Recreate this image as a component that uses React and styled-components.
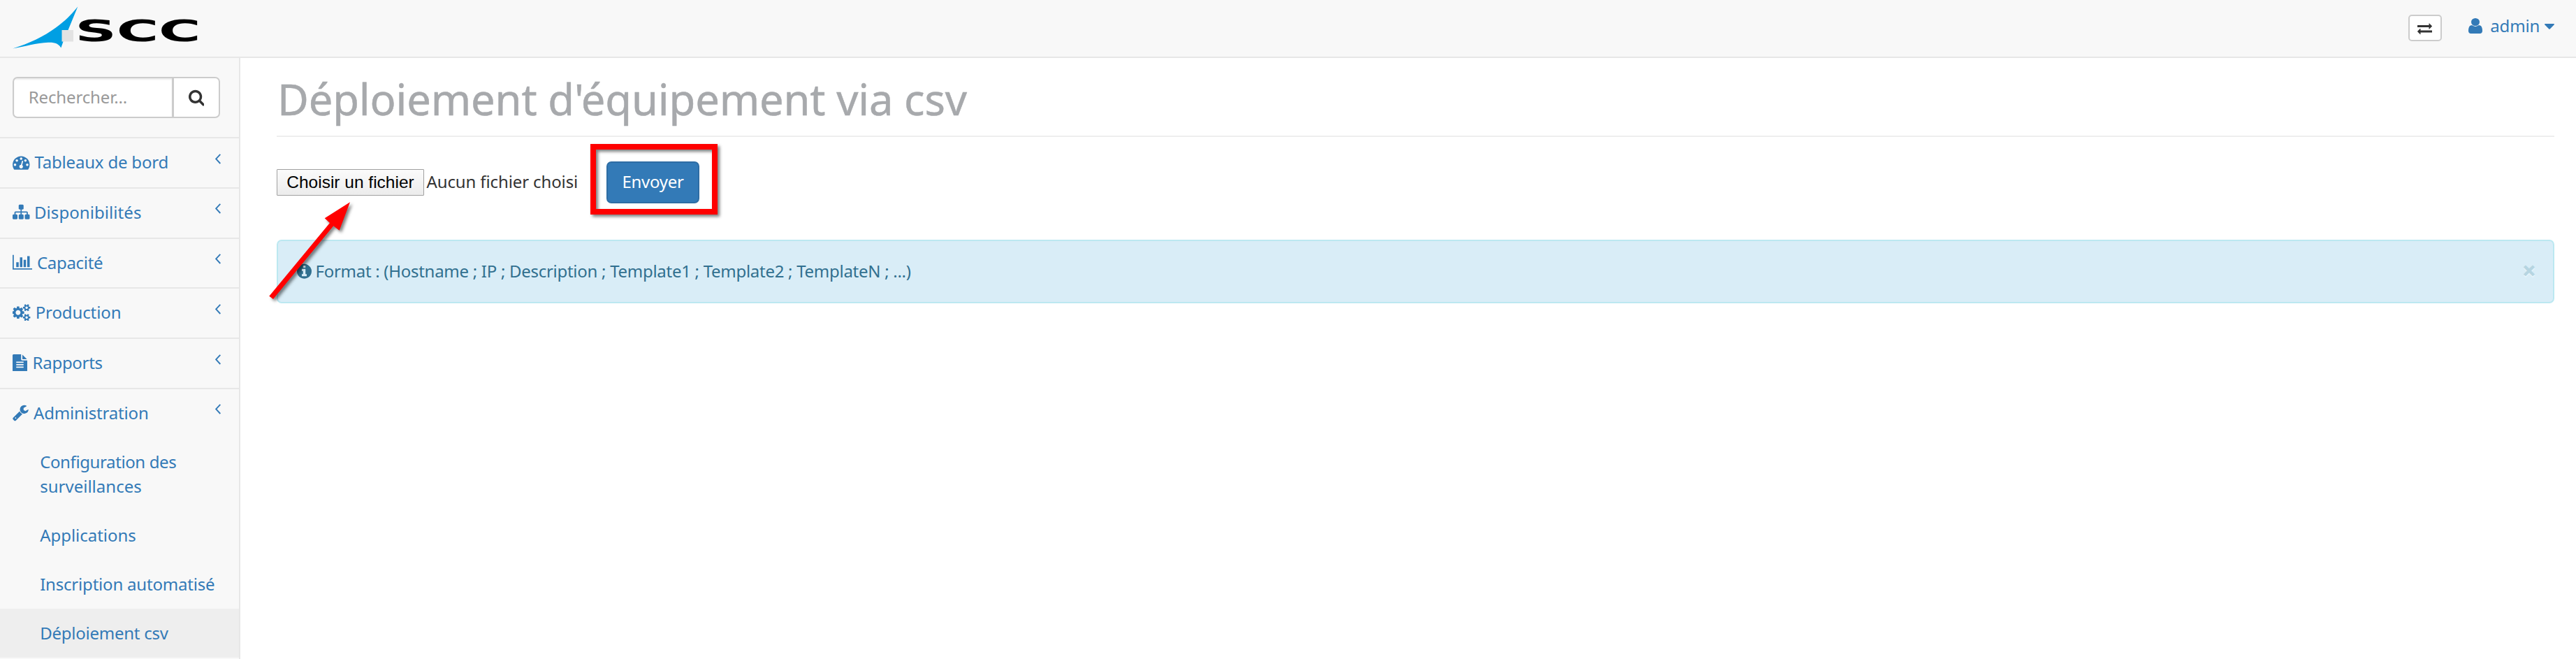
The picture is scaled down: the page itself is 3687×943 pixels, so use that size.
import React from "react";
import styled, { createGlobalStyle } from "styled-components";

const GlobalStyle = createGlobalStyle`
  *, *::before, *::after { box-sizing: border-box; }
  html, body, #root { height: 100%; }
  body {
    margin: 0;
    background: #fff;
    color: #333;
    font-family: "Noto Sans", "Open Sans", sans-serif;
    font-size: 24px;
    line-height: 35px;
    overflow: hidden;
  }
`;

/* Icon outlines on a 1792-unit em: start x, width, path */
const ICONS = {
  dashboard: [0, 1792, "M384 1152q0-53-37.5-90.5t-90.5-37.5-90.5 37.5-37.5 90.5 37.5 90.5 90.5 37.5 90.5-37.5 37.5-90.5zm192-448q0-53-37.5-90.5t-90.5-37.5-90.5 37.5-37.5 90.5 37.5 90.5 90.5 37.5 90.5-37.5 37.5-90.5zm428 481l101-382q6-26-7.5-48.5t-38.5-29.5-48 6.5-30 39.5l-101 382q-60 5-107 43.5t-63 98.5q-20 77 20 146t117 89 146-20 89-117q16-60-6-117t-72-91zm660-33q0-53-37.5-90.5t-90.5-37.5-90.5 37.5-37.5 90.5 37.5 90.5 90.5 37.5 90.5-37.5 37.5-90.5zm-640-640q0-53-37.5-90.5t-90.5-37.5-90.5 37.5-37.5 90.5 37.5 90.5 90.5 37.5 90.5-37.5 37.5-90.5zm448 192q0-53-37.5-90.5t-90.5-37.5-90.5 37.5-37.5 90.5 37.5 90.5 90.5 37.5 90.5-37.5 37.5-90.5zm320 448q0 261-141 483-19 29-54 29h-1402q-35 0-54-29-141-221-141-483 0-182 71-348t191-286 286-191 348-71 348 71 286 191 191 286 71 348z"],
  sitemap: [0, 1792, "M1792 1248v320q0 40-28 68t-68 28h-320q-40 0-68-28t-28-68v-320q0-40 28-68t68-28h96v-192h-512v192h96q40 0 68 28t28 68v320q0 40-28 68t-68 28h-320q-40 0-68-28t-28-68v-320q0-40 28-68t68-28h96v-192h-512v192h96q40 0 68 28t28 68v320q0 40-28 68t-68 28h-320q-40 0-68-28t-28-68v-320q0-40 28-68t68-28h96v-192q0-52 38-90t90-38h512v-192h-96q-40 0-68-28t-28-68v-320q0-40 28-68t68-28h320q40 0 68 28t28 68v320q0 40-28 68t-68 28h-96v192h512q52 0 90 38t38 90v192h96q40 0 68 28t28 68z"],
  chart: [0, 2048, "M640 896v512h-256v-512h256zm384-512v1024h-256v-1024h256zm1024 1152v128h-2048v-1536h128v1408h1920zm-640-896v768h-256v-768h256zm384-384v1152h-256v-1152h256z"],
  cogs: [0, 1920, "M832 896q0-106-75-181t-181-75-181 75-75 181 75 181 181 75 181-75 75-181zm768 512q0-52-38-90t-90-38-90 38-38 90q0 53 37.5 90.5t90.5 37.5 90.5-37.5 37.5-90.5zm0-1024q0-52-38-90t-90-38-90 38-38 90q0 53 37.5 90.5t90.5 37.5 90.5-37.5 37.5-90.5zm-384 421v185q0 10-7 19.5t-16 10.5l-155 24q-11 35-32 76 34 48 90 115 7 11 7 20 0 12-7 19-23 30-82.5 89.5t-78.5 59.5q-11 0-21-7l-115-90q-37 19-77 31-11 108-23 155-7 24-30 24h-186q-11 0-20-7.5t-10-17.5l-23-153q-34-10-75-31l-118 89q-7 7-20 7-11 0-21-8-144-133-144-160 0-9 7-19 10-14 41-53t47-61q-23-44-35-82l-152-24q-10-1-17-9.5t-7-19.5v-185q0-10 7-19.5t16-10.5l155-24q11-35 32-76-34-48-90-115-7-11-7-20 0-12 7-20 22-30 82-89t79-59q11 0 21 7l115 90q34-18 77-32 11-108 23-154 7-24 30-24h186q11 0 20 7.5t10 17.5l23 153q34 10 75 31l118-89q8-7 20-7 11 0 21 8 144 133 144 160 0 8-7 19-12 16-42 54t-45 60q23 48 34 82l152 23q10 2 17 10.5t7 19.5zm640 533v140q0 16-149 31-12 27-30 52 51 113 51 138 0 4-4 7-122 71-124 71-8 0-46-47t-52-68q-20 2-30 2t-30-2q-14 21-52 68t-46 47q-2 0-124-71-4-3-4-7 0-25 51-138-18-25-30-52-149-15-149-31v-140q0-16 149-31 13-29 30-52-51-113-51-138 0-4 4-7 4-2 35-20t59-34 30-16q8 0 46 46.5t52 67.5q20-2 30-2t30 2q51-71 92-112l6-2q4 0 124 70 4 3 4 7 0 25-51 138 17 23 30 52 149 15 149 31zm0-1024v140q0 16-149 31-12 27-30 52 51 113 51 138 0 4-4 7-122 71-124 71-8 0-46-47t-52-68q-20 2-30 2t-30-2q-14 21-52 68t-46 47q-2 0-124-71-4-3-4-7 0-25 51-138-18-25-30-52-149-15-149-31v-140q0-16 149-31 13-29 30-52-51-113-51-138 0-4 4-7 4-2 35-20t59-34 30-16q8 0 46 46.5t52 67.5q20-2 30-2t30 2q51-71 92-112l6-2q4 0 124 70 4 3 4 7 0 25-51 138 17 23 30 52 149 15 149 31z"],
  file: [128, 1536, "M1596 476q14 14 28 36h-472v-472q22 14 36 28zm-476 164h544v1056q0 40-28 68t-68 28h-1344q-40 0-68-28t-28-68v-1600q0-40 28-68t68-28h800v544q0 40 28 68t68 28zm160 736v-64q0-14-9-23t-23-9h-704q-14 0-23 9t-9 23v64q0 14 9 23t23 9h704q14 0 23-9t9-23zm0-256v-64q0-14-9-23t-23-9h-704q-14 0-23 9t-9 23v64q0 14 9 23t23 9h704q14 0 23-9t9-23zm0-256v-64q0-14-9-23t-23-9h-704q-14 0-23 9t-9 23v64q0 14 9 23t23 9h704q14 0 23-9t9-23z"],
  wrench: [64, 1664, "M448 1472q0-26-19-45t-45-19-45 19-19 45 19 45 45 19 45-19 19-45zm644-420l-682 682q-37 37-90 37-52 0-91-37l-106-108q-38-36-38-90 0-53 38-91l681-681q39 98 114.500 173.500t173.500 114.500zm634-435q0 39-23 106-47 134-164.500 217.500t-258.500 83.500q-185 0-316.500-131.500t-131.500-316.500 131.500-316.500 316.500-131.500q58 0 121.500 16.500t107.500 46.500q16 11 16 28t-16 28l-293 169v224l193 107q5-3 79-48.500t135.500-81 70.500-35.500q15 0 23.500 10t8.500 25z"],
  search: [64, 1664, "M1216 832q0-185-131.500-316.500t-316.500-131.500-316.500 131.500-131.500 316.500 131.500 316.500 316.500 131.500 316.500-131.500 131.500-316.500zm512 832q0 52-38 90t-90 38q-54 0-90-38l-343-342q-179 124-399 124-143 0-273.500-55.500t-225-150-150-225-55.500-273.500 55.500-273.500 150-225 225-150 273.500-55.500 273.500 55.500 225 150 150 225 55.500 273.500q0 220-124 399l343 343q37 37 37 90z"],
  info: [128, 1536, "M1152 1376v-160q0-14-9-23t-23-9h-96v-512q0-14-9-23t-23-9h-320q-14 0-23 9t-9 23v160q0 14 9 23t23 9h96v320h-96q-14 0-23 9t-9 23v160q0 14 9 23t23 9h448q14 0 23-9t9-23zm-128-896v-160q0-14-9-23t-23-9h-192q-14 0-23 9t-9 23v160q0 14 9 23t23 9h192q14 0 23-9t9-23zm640 416q0 209-103 385.500t-279.500 279.500-385.500 103-385.500-103-279.500-279.500-103-385.500 103-385.500 279.500-279.500 385.500-103 385.500 103 279.500 279.500 103 385.500z"],
  exchange: [0, 1792, "M1792 1184v192q0 13-9.500 22.500t-22.500 9.500h-1376v192q0 13-9.500 22.500t-22.500 9.500q-12 0-24-10l-319-320q-9-9-9-22 0-14 9-23l320-320q9-9 23-9 13 0 22.500 9.500t9.500 22.500v192h1376q13 0 22.500 9.500t9.500 22.500zm0-544q0 14-9 23l-320 320q-9 9-23 9-13 0-22.500-9.500t-9.500-22.500v-192h-1376q-13 0-22.500-9.500t-9.500-22.500v-192q0-13 9.500-22.500t22.500-9.500h1376v-192q0-14 9-23t23-9q12 0 24 10l319 319q9 9 9 23z"],
};

const Glyph = styled.svg`
  display: block;
  flex: none;
  fill: currentColor;
`;

function Icon({ name, size = 24.5 }) {
  const [x, w, d] = ICONS[name];
  return (
    <Glyph width={(w / 1792) * size} height={size} viewBox={`${x} 0 ${w} 1792`}>
      <path d={d} />
    </Glyph>
  );
}

const Page = styled.div`
  display: flex;
  flex-direction: column;
  height: 943px;
  position: relative;
`;

const Navbar = styled.header`
  display: flex;
  justify-content: space-between;
  height: 83px;
  flex: none;
  background: #f8f8f8;
  border-bottom: 2px solid #e7e7e7;
  padding: 0 31px 0 18px;
`;

const Logo = styled.svg`
  display: block;
  margin-top: 9px;
`;

const NavActions = styled.div`
  display: flex;
  align-items: flex-start;
`;

const ToggleButton = styled.button`
  display: flex;
  align-items: center;
  justify-content: center;
  width: 48px;
  height: 38px;
  margin: 21px 38.5px 0 0;
  padding: 0;
  color: #333;
  background: #fff;
  border: 2px solid #ccc;
  border-radius: 5px;
`;

const UserMenu = styled.a`
  display: flex;
  align-items: flex-start;
  height: 35px;
  margin-top: 18.5px;
  color: #337ab7;
`;

const UserIcon = styled(Glyph)`
  margin: 7.5px 11px 0 0;
`;

const Caret = styled(Glyph)`
  margin: 15px 0 0 7px;
`;

const Text = styled.span`
  letter-spacing: ${(p) => p.$ls || 0}px;
  white-space: nowrap;
`;

const Body = styled.div`
  display: flex;
  flex: 1;
  min-height: 0;
`;

const Sidebar = styled.nav`
  width: 344px;
  flex: none;
  background: #f8f8f8;
  border-right: 2px solid #e7e7e7;
`;

const SearchRow = styled.div`
  height: 115px;
  padding: 27px 27px 0 18px;
  border-bottom: 2px solid #e7e7e7;
`;

const SearchGroup = styled.div`
  display: flex;
  height: 59px;
  background: #fff;
  border: 2px solid #ccc;
  border-radius: 7px;
  overflow: hidden;
`;

const SearchField = styled.div`
  flex: 1;
  padding: 9px 0 0 20.7px;
  color: #999;
  box-shadow: inset 0 2px 2px rgba(0, 0, 0, 0.075);
`;

const SearchButton = styled.div`
  display: flex;
  align-items: center;
  width: 67px;
  padding-left: 20.5px;
  color: #333;
  border-left: 3px solid #ccc;
`;

const MenuItem = styled.a`
  display: flex;
  align-items: flex-start;
  height: ${(p) => (p.$open ? 69.25 : 71.75)}px;
  padding: 16px 26px 0 18px;
  color: #337ab7;
  border-bottom: ${(p) => (p.$open ? "0" : "2px solid #e7e7e7")};
`;

const IconSlot = styled.span`
  width: ${(p) => p.$width}px;
  flex: none;
  padding-top: 5.5px;
`;

const Chevron = styled.svg`
  margin: 5.5px 0 0 auto;
  fill: none;
  stroke: currentColor;
  stroke-width: 1.9;
`;

const SubItem = styled.a`
  display: flex;
  flex-direction: column;
  padding: 16.5px 20px 18.5px 57.2px;
  color: #337ab7;
  background: ${(p) => (p.$active ? "#eee" : "transparent")};
`;

const Main = styled.main`
  flex: 1;
  padding: 24px 31px 0 52px;
`;

const Title = styled.h1`
  height: 89px;
  margin: 0;
  padding-left: 1px;
  color: #a7a9ac;
  font-size: 61.5px;
  font-weight: 400;
  line-height: 69px;
  letter-spacing: -0.18px;
  -webkit-text-stroke: 0.5px #a7a9ac;
  border-bottom: 2px solid #eee;
`;

const UploadForm = styled.div`
  display: flex;
  align-items: center;
  height: 60px;
  margin-top: 35px;
`;

const FileButton = styled.button`
  width: 211px;
  height: 38px;
  padding: 0;
  color: #000;
  font: 24.5px "Liberation Sans", Arial, sans-serif;
  white-space: nowrap;
  background: linear-gradient(#fbfbfb, #ececec);
  border: 1px solid #a0a0a0;
  border-radius: 1px;
`;

const FileName = styled.span`
  width: 261px;
  padding: 0 0 3px 3.5px;
  letter-spacing: -0.12px;
  white-space: nowrap;
`;

const SubmitWrap = styled.div`
  position: relative;
`;

const SubmitButton = styled.button`
  display: block;
  width: 133px;
  height: 60px;
  padding: 0 0 3px;
  color: #fff;
  font: inherit;
  letter-spacing: -0.28px;
  background: #337ab7;
  border: 2px solid #2e6da4;
  border-radius: 7px;
`;

const Highlight = styled.div`
  position: absolute;
  top: -25px;
  left: -23px;
  width: 182px;
  height: 101px;
  border: 8px solid #f00;
  filter: drop-shadow(3px 3px 2px rgba(0, 0, 0, 0.5));
`;

const Alert = styled.div`
  display: flex;
  align-items: center;
  height: 91px;
  margin-top: 52px;
  padding: 0 26px 0 27px;
  color: #31708f;
  background: #d9edf7;
  border: 2px solid #bce8f1;
  border-radius: 7px;
`;

const AlertText = styled.span`
  padding: 0 0 2px 5.5px;
  letter-spacing: -0.28px;
  white-space: nowrap;
`;

const Close = styled.span`
  margin-left: auto;
  padding-bottom: 5px;
  width: 16px;
  display: flex;
  justify-content: center;
  color: #b6d5e1;
  font-size: 36px;
  font-weight: 800;
  text-shadow: 0 2px 0 #e6f4fb;
`;

const Arrow = styled.svg`
  position: absolute;
  left: 380px;
  top: 280px;
  overflow: visible;
  filter: drop-shadow(3px 3px 2px rgba(0, 0, 0, 0.5));
`;

const MENU = [
  { icon: "dashboard", label: "Tableaux de bord", ls: -0.19, slot: 31.5 },
  { icon: "sitemap", label: "Disponibilités", ls: 0.07, slot: 31 },
  { icon: "chart", label: "Capacité", ls: -0.32, slot: 35 },
  { icon: "cogs", label: "Production", ls: -0.11, slot: 32.7 },
  { icon: "file", label: "Rapports", ls: -0.29, slot: 28.6 },
  { icon: "wrench", label: "Administration", ls: -0.17, slot: 30, open: true },
];

const SUBMENU = [
  { lines: [["Configuration des", -0.39], ["surveillances", 0.01]] },
  { lines: [["Applications", -0.04]] },
  { lines: [["Inscription automatisé", -0.2]] },
  { lines: [["Déploiement csv", -0.25]], active: true },
];

function Brand() {
  return (
    <Logo width="270" height="62" viewBox="18 9 270 62">
      <path d="M111.300 9.500C101 22 93 30 80 39.500C63 52 42 62 18.300 69.500C35 66.500 52 61.500 69 60.700C79 60.400 84 62.500 87.300 68.500L90.500 59.500V43H97.500Z" fill="#009fe3" />
      <rect x="88.500" y="43" width="16.500" height="16.500" fill="#e3e3e3" />
      <text
        x="107.500"
        y="59.300"
        fontFamily="DejaVu Sans"
        fontWeight="700"
        fontSize="42"
        textLength="180"
        lengthAdjust="spacingAndGlyphs"
      >
        SCC
      </text>
    </Logo>
  );
}

export default function App() {
  return (
    <Page>
      <GlobalStyle />
      <Navbar>
        <Brand />
        <NavActions>
          <ToggleButton>
            <Icon name="exchange" size={21} />
          </ToggleButton>
          <UserMenu>
            <UserIcon width="20" height="22" viewBox="256 128 1280 1536" preserveAspectRatio="none">
              <path d="M1536 1399q0 109-62.500 187t-150.500 78h-854q-88 0-150.500-78t-62.500-187q0-85 8.500-160.500t31.500-152 58.500-131 94-89 134.500-34.500q131 128 313 128t313-128q76 0 134.500 34.500t94 89 58.500 131 31.500 152 8.500 160.500zm-256-887q0 159-112.500 271.500t-271.500 112.500-271.500-112.500-112.500-271.500 112.500-271.500 271.500-112.500 271.500 112.500 112.500 271.500z" />
            </UserIcon>
            <Text $ls={-0.21}>admin</Text>
            <Caret width="14" height="8" viewBox="0 0 14 8">
              <path d="M0.800 0H13.200Q14.400 0.400 13.600 1.400L7.700 7.500Q7 8.200 6.300 7.500L0.400 1.400Q-0.400 0.400 0.800 0Z" />
            </Caret>
          </UserMenu>
        </NavActions>
      </Navbar>
      <Body>
        <Sidebar>
          <SearchRow>
            <SearchGroup>
              <SearchField>
                <Text $ls={-0.13}>Rechercher...</Text>
              </SearchField>
              <SearchButton>
                <Icon name="search" />
              </SearchButton>
            </SearchGroup>
          </SearchRow>
          {MENU.map((m) => (
            <MenuItem key={m.label} $open={m.open}>
              <IconSlot $width={m.slot}>
                <Icon name={m.icon} />
              </IconSlot>
              <Text $ls={m.ls}>{m.label}</Text>
              <Chevron width="8" height="15" viewBox="0 0 8 15">
                <path d="M7.300 0.800L1.200 7.400L7.300 14" />
              </Chevron>
            </MenuItem>
          ))}
          {SUBMENU.map((s) => (
            <SubItem key={s.lines[0][0]} $active={s.active}>
              {s.lines.map(([t, ls]) => (
                <Text key={t} $ls={ls}>{t}</Text>
              ))}
            </SubItem>
          ))}
        </Sidebar>
        <Main>
          <Title>Déploiement d'équipement via csv</Title>
          <UploadForm>
            <FileButton>Choisir un fichier</FileButton>
            <FileName>Aucun fichier choisi</FileName>
            <SubmitWrap>
              <SubmitButton>Envoyer</SubmitButton>
              <Highlight />
            </SubmitWrap>
          </UploadForm>
          <Alert>
            <Icon name="info" />
            <AlertText>Format : (Hostname ; IP ; Description ; Template1 ; Template2 ; TemplateN ; ...)</AlertText>
            <Close>×</Close>
          </Alert>
        </Main>
      </Body>
      <Arrow width="125" height="152" viewBox="380 280 125 152">
        <path d="M501 289.300L485.700 329.700L477.300 323.300L391 428L385.300 423.700L472 319L464.700 312.300Z" fill="#f00" />
      </Arrow>
    </Page>
  );
}
